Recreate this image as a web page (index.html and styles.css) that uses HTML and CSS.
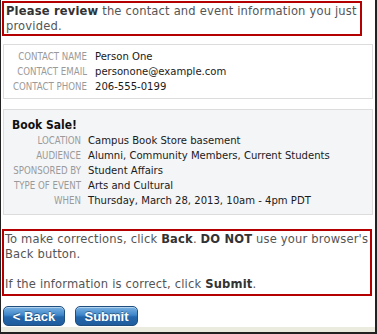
FILE: index.html
```html
<!DOCTYPE html>
<html lang="en">
<head>
  <meta charset="UTF-8">
  <title>Review your submission</title>
  <link rel="stylesheet" href="styles.css">
</head>
<body>

<div class="page">
  <!-- Hinweis oben -->
  <div class="notice notice-top">
    <strong>Please review</strong> the contact and event information you just provided.
  </div>

  <!-- Kontaktdaten -->
  <div class="panel contact-panel">
    <dl class="fields contact-fields">
      <dt>Contact Name</dt><dd>Person One</dd>
      <dt>Contact Email</dt><dd>personone@example.com</dd>
      <dt>Contact Phone</dt><dd>206-555-0199</dd>
    </dl>
  </div>

  <!-- Veranstaltung -->
  <div class="panel event-panel">
    <h3 class="event-title">Book Sale!</h3>
    <dl class="fields event-fields">
      <dt>Location</dt><dd>Campus Book Store basement</dd>
      <dt>Audience</dt><dd>Alumni, Community Members, Current Students</dd>
      <dt>Sponsored by</dt><dd>Student Affairs</dd>
      <dt>Type of event</dt><dd>Arts and Cultural</dd>
      <dt>When</dt><dd>Thursday, March 28, 2013, 10am - 4pm PDT</dd>
    </dl>
  </div>

  <!-- Hinweis unten -->
  <div class="notice notice-bottom">
    <p>To make corrections, click <strong>Back</strong>. <strong>DO NOT</strong> use your browser's Back button.</p>
    <p>If the information is correct, click <strong>Submit</strong>.</p>
  </div>

  <div class="actions">
    <button class="btn btn-back" type="button">&lt; Back</button>
    <button class="btn btn-submit" type="button">Submit</button>
  </div>

  <div class="footer-strip"></div>
</div>

</body>
</html>
```

FILE: styles.css
```css
html, body {
  margin: 0;
  padding: 0;
  background: #fff;
}

/* Rahmen der ganzen Seite */
.page {
  box-sizing: border-box;
  width: 377px;
  height: 334px;
  display: flex;
  flex-direction: column;
  border-left: 1px solid #222;
  border-right: 2px solid #222;
  border-bottom: 2px solid #222;
  font-family: "DejaVu Sans Condensed", "Noto Sans", sans-serif;
  font-size: 12.8px;
  line-height: 15px;
  color: #555;
}

.notice {
  border: 2px solid #b40000;
  letter-spacing: 0.18px;
}

.notice strong {
  color: #333;
}

.notice-top {
  width: 360px;
  box-sizing: border-box;
  margin: 1px 0 0 1px;
  padding: 0 2px 1px 2px;
}

.notice-bottom {
  width: 370px;
  box-sizing: border-box;
  margin: 14px 0 0 1px;
  padding: 0 1px 3px 1px;
}

.notice-bottom p {
  margin: 0;
}

.notice-bottom p + p {
  margin-top: 15px;
}

/* Kästen mit Feldern */
.panel {
  border: 1px solid #dcdcdc;
  margin: 0 2px 0 2px;
}

.contact-panel {
  margin-top: 8px;
  padding: 4px 8px 4px 8px;
}

.event-panel {
  margin-top: 10px;
  padding: 8px 8px 6px 8px;
  background-color: #f4f5f7;
}

.event-title {
  margin: 0;
  font-size: 12px;
  line-height: 15px;
  font-weight: bold;
  color: #111;
}

.fields {
  display: grid;
  column-gap: 8px;
  margin: 0;
  line-height: 15px;
}

.contact-fields {
  grid-template-columns: 75px 1fr;
}

.event-fields {
  grid-template-columns: 69px 1fr;
  column-gap: 7px;
}

.fields dt {
  text-align: right;
  text-transform: uppercase;
  font-size: 9.6px;
  color: #9a9a9a;
  white-space: nowrap;
}

.fields dd {
  margin: 0;
  font-size: 11.2px;
  color: #1a1a1a;
  white-space: nowrap;
}

/* Schaltflächen */
.actions {
  display: flex;
  gap: 10px;
  margin: 10px 0 0 2px;
}

.btn {
  height: 20px;
  padding: 0;
  border: 1px solid #1f4f7e;
  border-radius: 5px;
  background: linear-gradient(#7ab2e2 0%, #3f86c9 45%, #2467ad 55%, #1f5c9c 100%);
  box-shadow: inset 0 1px 0 rgba(255, 255, 255, 0.45);
  color: #fff;
  font-family: "Liberation Sans Narrow", "Liberation Sans", sans-serif;
  font-stretch: condensed;
  font-size: 13px;
  font-weight: bold;
  text-shadow: 0 -1px 0 rgba(0, 0, 0, 0.35);
  cursor: pointer;
}

.btn-back {
  width: 62px;
}

.btn-submit {
  width: 63px;
}

.footer-strip {
  margin-top: auto;
  height: 5px;
  background-color: #ecebdf;
}
```
